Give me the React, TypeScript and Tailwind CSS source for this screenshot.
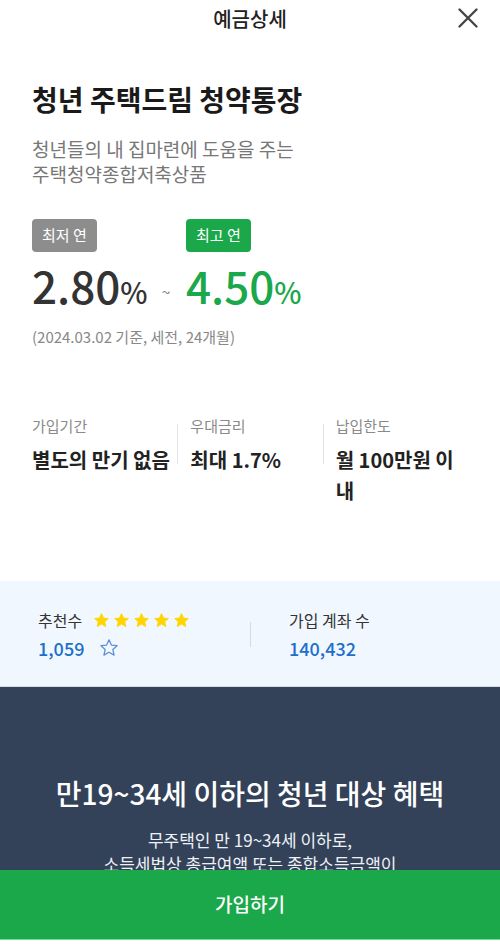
const font = { fontFamily: '"Noto Sans CJK KR", "Noto Sans", sans-serif' };

function Star({ filled }: { filled?: boolean }) {
  return (
    <svg
      width={filled ? 17 : 20}
      height={filled ? 17 : 20}
      viewBox="0 0 24 24"
      className="shrink-0"
    >
      <path
        d="M12 2.2l2.9 6.3 6.8.7-5.1 4.6 1.5 6.8L12 17.1l-6.1 3.5 1.5-6.8-5.1-4.6 6.8-.7z"
        fill={filled ? "#ffd400" : "none"}
        stroke={filled ? "#ffd400" : "#5b8fdb"}
        strokeWidth={filled ? 1.2 : 1.5}
        strokeLinejoin="round"
      />
    </svg>
  );
}

function InfoCol({ label, value, divider }: { label: string; value: string; divider?: boolean }) {
  return (
    <div className="flex">
      {divider && <div className="w-px h-10 mt-[9px] bg-[#e3e3e3] mr-3 shrink-0" />}
      <div className={`min-w-0 ${divider ? "pr-3" : ""}`}>
        <p className="text-[15px] leading-[22px] text-[#8a8a8a]">{label}</p>
        <p className="mt-[7px] text-[20px] leading-[31px] font-semibold text-[#222]">{value}</p>
      </div>
    </div>
  );
}

export default function App() {
  return (
    <div className="h-[952px] flex flex-col bg-white overflow-hidden" style={font}>
      <div className="flex-1 overflow-hidden">
        {/* Header */}
        <div className="relative h-[38px] flex items-center justify-center">
          <h1 className="text-[20px] font-medium text-[#222]">예금상세</h1>
          <button className="absolute right-[22px] top-[8px]">
            <svg width="20" height="20" viewBox="0 0 20 20">
              <path d="M1.5 1.5l17 17M18.5 1.5l-17 17" stroke="#444" strokeWidth="2.3" strokeLinecap="round" />
            </svg>
          </button>
        </div>

        {/* Product */}
        <div className="px-8">
          <h2 className="mt-[42px] text-[28px] leading-[39px] font-bold text-[#1a1a1a]">
            청년 주택드림 청약통장
          </h2>
          <p className="mt-[17px] text-[19px] leading-[25px] text-[#777]">
            청년들의 내 집마련에 도움을 주는
            <br />
            주택청약종합저축상품
          </p>

          <div className="mt-[33px] flex items-start">
            <div className="w-[114px]">
              <span className="inline-flex h-[33px] px-[10px] items-center rounded-[4px] bg-[#8d8d8d] text-white text-[15px]">
                최저 연
              </span>
              <p className="mt-[11px] leading-[44px] text-[#333] font-medium">
                <span className="text-[44px]">2.80</span>
                <span className="text-[29px]">%</span>
              </p>
            </div>
            <span className="mt-[60px] w-[40px] text-center text-[16px] text-[#888]">~</span>
            <div>
              <span className="inline-flex h-[33px] px-[10px] items-center rounded-[4px] bg-[#1ba84a] text-white text-[15px]">
                최고 연
              </span>
              <p className="mt-[11px] leading-[44px] text-[#1ba84a] font-medium">
                <span className="text-[44px]">4.50</span>
                <span className="text-[29px]">%</span>
              </p>
            </div>
          </div>

          <p className="mt-[7px] text-[15px] leading-[22px] text-[#888]">
            (2024.03.02 기준, 세전, 24개월)
          </p>

          <div className="mt-[67px] grid grid-cols-3">
            <InfoCol label="가입기간" value="별도의 만기 없음" />
            <InfoCol label="우대금리" value="최대 1.7%" divider />
            <InfoCol label="납입한도" value="월 100만원 이내" divider />
          </div>
        </div>

        {/* Stats */}
        <div className="mt-[75px] bg-[#f1f7fe] border-b border-[#d5dbe3] grid grid-cols-2 pt-[28px] pb-[26px]">
          <div className="pl-[38px]">
            <div className="flex items-center">
              <span className="text-[16px] leading-[22px] text-[#333]">추천수</span>
              <div className="ml-[11px] flex gap-[3px]">
                <Star filled />
                <Star filled />
                <Star filled />
                <Star filled />
                <Star filled />
              </div>
            </div>
            <div className="mt-[5px] flex items-center">
              <span className="text-[18px] leading-[24px] font-medium text-[#1c6fcb]">1,059</span>
              <span className="ml-[15px]">
                <Star />
              </span>
            </div>
          </div>
          <div className="flex items-center">
            <div className="w-px h-[25px] bg-[#d5dbe3]" />
            <div className="pl-[38px]">
              <p className="text-[16px] leading-[22px] text-[#333]">가입 계좌 수</p>
              <p className="mt-[5px] text-[18px] leading-[24px] font-medium text-[#1c6fcb]">140,432</p>
            </div>
          </div>
        </div>

        {/* Benefit */}
        <div className="bg-[#334259] pt-[88px] pb-16 text-center text-white">
          <h3 className="text-[28px] leading-[36px] font-medium">만19~34세 이하의 청년 대상 혜택</h3>
          <p className="mt-[17px] text-[17px] leading-[24px] text-[#eef1f6]">
            무주택인 만 19~34세 이하로,
            <br />
            소득세법상 총급여액 또는 종합소득금액이
            <br />
            연 5천만원 이하인 청년
          </p>
        </div>
      </div>

      <button className="h-[70px] shrink-0 bg-[#1ba84a] border-b border-[#6ddc95] text-white text-[19px] font-medium">
        가입하기
      </button>
      <div className="h-[12px] shrink-0 bg-white" />
    </div>
  );
}
